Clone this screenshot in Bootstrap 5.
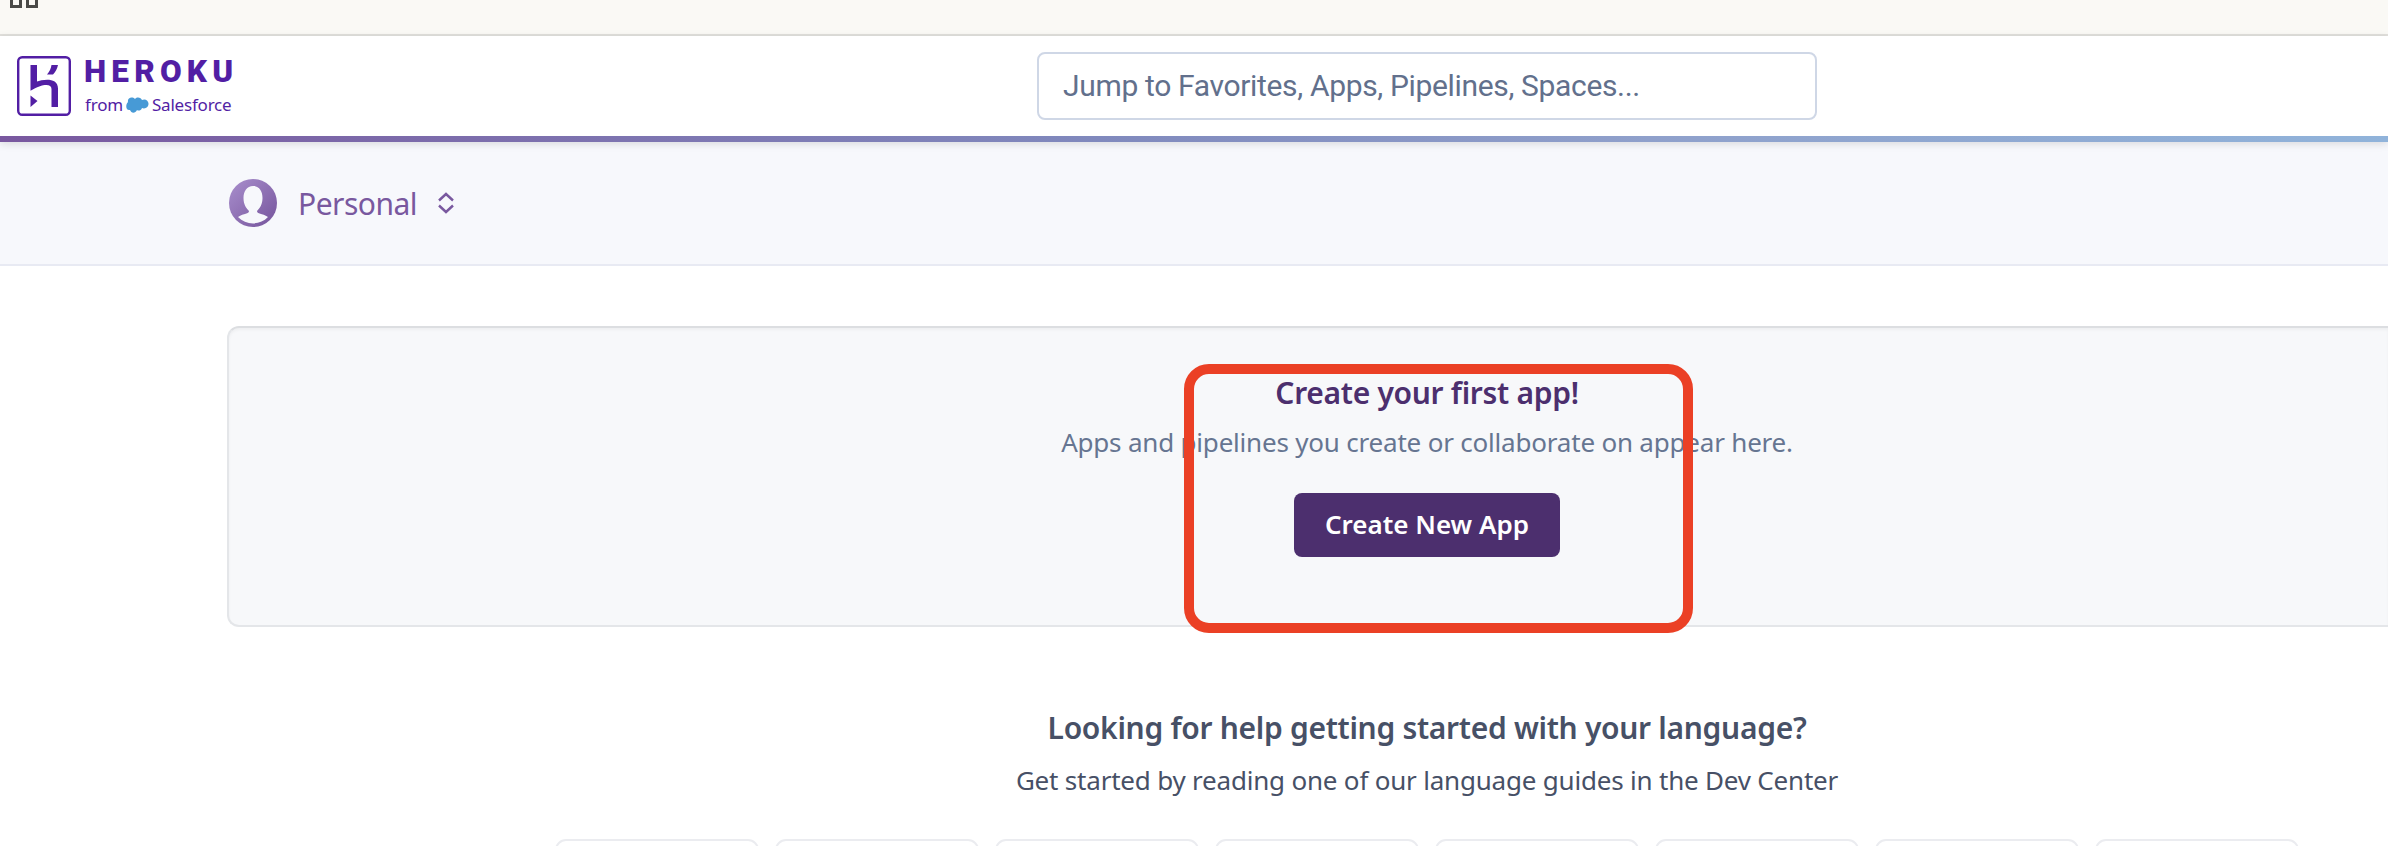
<!DOCTYPE html>
<html lang="en">
<head>
<meta charset="utf-8">
<title>Personal apps | Heroku</title>
<link href="https://cdn.jsdelivr.net/npm/bootstrap@5.3.0/dist/css/bootstrap.min.css" rel="stylesheet">
<style>
body{font-family:"Noto Sans",sans-serif;color:#475066;background:#fff}
.page{height:846px;overflow:hidden}
.tabs-bar{height:36px;background:#faf9f5;border-bottom:2px solid #e1e0dc;padding-left:10px}
.top-bar{height:106px;padding:16px 0 0 17px;border-bottom:6px solid;border-image:linear-gradient(90deg,#79589f 0,#8089bd 46%,#8fa0cb 69%,#90b3da 100%) 1;box-shadow:0 2px 8px rgba(0,0,0,.12);position:relative}
.logo-col{flex:0 0 1020px}
.word{font:900 31.500px/31px Roboto,sans-serif;letter-spacing:5.2px;color:#521ea4;white-space:nowrap;padding-top:4px}
.from-line{font-size:17px;line-height:20px;color:#521ea4;white-space:nowrap;margin-top:8px;letter-spacing:-.2px}
.search-box{width:780px;height:68px;border:2px solid #cfd7e6;border-radius:8px;padding:0 0 0 24px;font:30px/64px Roboto,sans-serif;letter-spacing:-.34px;color:#62708c;white-space:nowrap}
.account{height:124px;background:#f7f8fc;border-bottom:2px solid #e8eaf3;padding-left:229px;color:#79589f;font-size:30px}
.account-name{margin-left:21px;width:120px;letter-spacing:-.5px;white-space:nowrap}
.panel{height:301px;margin:60px 0 0 227px;padding:45px 0 0 237px;background:#f7f8fa;border:2px solid #e4e6e9;border-right:0;border-top-color:#dcdee1;border-radius:12px 0 0 12px;box-shadow:inset 0 2px 3px rgba(0,0,0,.04);position:relative}
.help{padding-left:466px}
.big{font-size:30px;line-height:40px;font-weight:600;margin:0;white-space:nowrap;letter-spacing:-.3px}
.txt{font-size:26px;line-height:36px;margin:0;white-space:nowrap;letter-spacing:-.2px}
.btn-new{width:266px;height:64px;margin-top:33px;padding:0 0 2px;background:#4c2f6e;color:#fff;border:0;border-radius:8px;font-size:26px;font-weight:600;line-height:62px}
.frame{left:955px;top:36px;width:509px;height:269px;border:10px solid #eb4025;border-radius:25px}
.guides{height:7px;margin-top:41px;overflow:hidden}
.guide{width:204px;height:40px;border:2px solid #ebecf0;border-radius:11px}
</style>
</head>
<body>
<div class="page">
<div class="tabs-bar"><svg class="d-block" width="30" height="9" fill="none" stroke="#4a4a47" stroke-width="3"><path d="M1.500 0V6.500H10.500V0M17.500 0V6.500H26.500V0"/></svg></div>
<header class="top-bar d-flex align-items-start">
 <div class="logo-col d-flex">
  <svg width="54" height="64" viewBox="0 0 54 64" fill="#521ea4"><rect x="1.200" y="5.200" width="51.600" height="57.600" rx="4" fill="none" stroke="#521ea4" stroke-width="2.400"/><path d="M13.500 13H20V29.500C25 27.500 41 24.500 41 36.500V55H34.500V37C34.500 31 25 31.500 13.500 38.800ZM34.500 13H41C40.200 17 38.500 20 36 22.500H30C32.500 19.500 34 16.500 34.500 13ZM13.500 43.500L20.500 49L13.500 55Z"/></svg>
  <div style="margin-left:13px">
   <div class="word">HEROKU</div>
   <div class="from-line d-flex align-items-center"><span style="margin-left:1px">from</span><svg style="margin:0 3px" width="23" height="17" viewBox="0 0 23 17" fill="#479ad6"><path d="M2 5C1 1 6-1 9 2C11 0 14 0 16 3C20 1 24 5 22 9C21 11 18 12 16 11C15 14 12 14 11 13C9 17 5 16 4 13C0 14-1 8 2 5Z"/></svg>Salesforce</div>
  </div>
 </div>
 <div class="search-box">Jump to Favorites, Apps, Pipelines, Spaces...</div>
</header>
<div class="account d-flex align-items-center">
 <svg width="48" height="48" viewBox="0 0 48 48"><defs><linearGradient id="g" x1="0" y1="0" x2="1" y2="1"><stop stop-color="#a98fcd"/><stop offset="1" stop-color="#75539b"/></linearGradient></defs><circle cx="24" cy="24" r="24" fill="url(#g)"/><path fill="#f7f8fc" d="M24 7C30 7 33.500 12 33.500 19C33.500 25 31 29 28 32C28 35 33 34 39 38C31 46.500 17 46.500 9 38C15 34 20 35 20 32C17 29 14.500 25 14.500 19C14.500 12 18 7 24 7Z"/></svg>
 <span class="account-name">Personal</span>
 <svg style="margin-left:20px" width="16" height="22" fill="none" stroke="#79589f" stroke-width="2.400"><path d="M1 8.500L8 2L15 8.500M1 13.500L8 20L15 13.500"/></svg>
</div>
<section class="panel text-center">
 <h2 class="big" style="color:#4c2f6e">Create your first app!</h2>
 <p class="txt" style="color:#667591;margin-top:11px">Apps and pipelines you create or collaborate on appear here.</p>
 <button class="btn btn-new d-block mx-auto">Create New App</button>
 <div class="frame position-absolute"></div>
</section>
<section class="help text-center">
 <h2 class="big" style="margin-top:81px">Looking for help getting started with your language?</h2>
 <p class="txt" style="margin-top:14px">Get started by reading one of our language guides in the Dev Center</p>
 <div class="guides d-flex justify-content-center gap-3"><div class="guide"></div><div class="guide"></div><div class="guide"></div><div class="guide"></div><div class="guide"></div><div class="guide"></div><div class="guide"></div><div class="guide"></div></div>
</section>
</div>
<script src="https://cdn.jsdelivr.net/npm/bootstrap@5.3.0/dist/js/bootstrap.bundle.min.js"></script>
</body>
</html>
